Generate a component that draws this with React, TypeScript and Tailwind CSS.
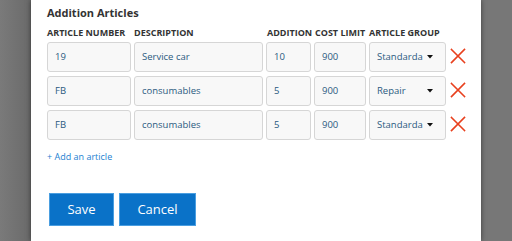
import React from "react";

const rows = [
  { num: "19", desc: "Service car", add: "10", cost: "900", group: "Standarda" },
  { num: "FB", desc: "consumables", add: "5", cost: "900", group: "Repair" },
  { num: "FB", desc: "consumables", add: "5", cost: "900", group: "Standarda" },
];

function XIcon() {
  return (
    <svg width="16" height="16" viewBox="0 0 16 16" className="block">
      <path d="M1.5 1.5 L14.5 14.5 M14.5 1.5 L1.5 14.5" stroke="#e8401e" strokeWidth="1.6" strokeLinecap="square" fill="none" />
    </svg>
  );
}

function Field({ children, extra }: { children: React.ReactNode; extra?: React.ReactNode }) {
  return (
    <div className="h-[30px] rounded-[3px] border border-[#d6d6d6] bg-[#f8f8f8] flex items-center pl-[7px] pr-[12px] text-[9.5px] text-[#2b5a80]">
      <span className="whitespace-nowrap">{children}</span>
      {extra}
    </div>
  );
}

const head = "text-[9px] font-bold text-[#333] leading-[10px] whitespace-nowrap";

export default function App() {
  return (
    <div className="w-[512px] h-[241px] flex bg-[#767676] overflow-hidden" style={{ fontFamily: '"Open Sans", "Noto Sans", sans-serif' }}>
      <div className="w-[31px] h-full bg-[linear-gradient(to_right,#7a7a7a,#6a6a6a)]" />
      <div className="w-[450px] h-full bg-white shadow-[0_0_5px_rgba(0,0,0,0.5)] pl-[16px] relative z-10">
        <div className="mt-[5px] text-[11px] leading-[16px] font-bold text-[#333]">Addition Articles</div>
        <div className="grid grid-cols-[84px_129px_45px_52px_77px_20px] gap-x-[3px] gap-y-[4px] mt-[7px]">
          <div className={head}>ARTICLE NUMBER</div>
          <div className={head}>DESCRIPTION</div>
          <div className={head + " pl-[1px]"}>ADDITION</div>
          <div className={head + " pl-[1px]"}>COST LIMIT</div>
          <div className={head + " col-span-2"}>ARTICLE GROUP</div>
          {rows.map((r, i) => (
            <React.Fragment key={i}>
              <Field>{r.num}</Field>
              <Field>{r.desc}</Field>
              <Field>{r.add}</Field>
              <Field>{r.cost}</Field>
              <Field
                extra={
                  <svg width="6" height="4" viewBox="0 0 6 4" className="block shrink-0 ml-auto">
                    <path d="M0 0 L6 0 L3 3.5 Z" fill="#111" />
                  </svg>
                }
              >
                {r.group}
              </Field>
              <div className="flex items-center pl-[1px] pb-[2px]">
                <XIcon />
              </div>
            </React.Fragment>
          ))}
        </div>
        <div className="mt-[11px] text-[9px] leading-[12px] text-[#1d7fd1]">+ Add an article</div>
        <div className="flex gap-[5px] mt-[30px] ml-[2px]">
          <button className="w-[65px] h-[33px] bg-[#0a72c8] border border-[#4a9ee0] text-white text-[13px]">Save</button>
          <button className="w-[77px] h-[33px] bg-[#0a72c8] border border-[#4a9ee0] text-white text-[13px]">Cancel</button>
        </div>
      </div>
      <div className="flex-1 h-full bg-[#777777]" />
    </div>
  );
}
